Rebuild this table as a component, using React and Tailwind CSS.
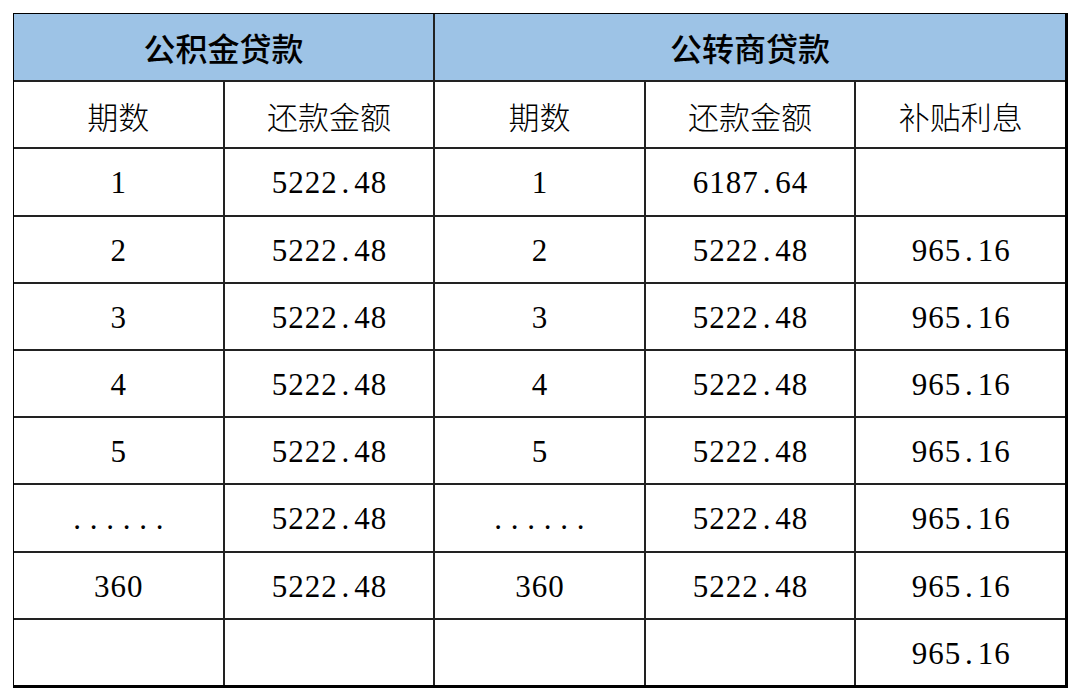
import React from "react";

const cjk = { fontFamily: '"Noto Sans CJK SC", "Noto Sans", sans-serif' };

function Num({ v }) {
  return (
    <span className="flex pt-[2px]">
      {v.split("").map((c, i) => (
        <span
          key={i}
          className="inline-block w-[16.5px] text-center text-[31px] leading-none font-['Liberation_Serif',serif]"
        >
          {c}
        </span>
      ))}
    </span>
  );
}

function Cell({ children, className = "" }) {
  return (
    <div className={"bg-white flex items-center justify-center text-black " + className}>{children}</div>
  );
}

function CjkCell({ t }) {
  return (
    <Cell>
      <span className="text-[31px] leading-none pt-[2px] font-light" style={cjk}>{t}</span>
    </Cell>
  );
}

const rows = [
  ["1", "5222.48", "1", "6187.64", ""],
  ["2", "5222.48", "2", "5222.48", "965.16"],
  ["3", "5222.48", "3", "5222.48", "965.16"],
  ["4", "5222.48", "4", "5222.48", "965.16"],
  ["5", "5222.48", "5", "5222.48", "965.16"],
  ["......", "5222.48", "......", "5222.48", "965.16"],
  ["360", "5222.48", "360", "5222.48", "965.16"],
  ["", "", "", "", "965.16"],
];

export default function App() {
  return (
    <div className="w-[1080px] h-[700px] bg-white pt-[13px] pl-[13px]">
      <div className="w-[1055px] h-[675px] border-l border-t border-r-[3px] border-b-[3px] border-black bg-[#222] grid grid-cols-5 grid-rows-[68fr_repeat(9,67fr)] gap-[2px]">
        <div className="col-span-2 bg-[#9dc3e6] flex items-center justify-center">
          <span className="text-[32px] font-medium leading-none" style={cjk}>公积金贷款</span>
        </div>
        <div className="col-span-3 bg-[#9dc3e6] flex items-center justify-center">
          <span className="text-[32px] font-medium leading-none" style={cjk}>公转商贷款</span>
        </div>
        <CjkCell t="期数" />
        <CjkCell t="还款金额" />
        <CjkCell t="期数" />
        <CjkCell t="还款金额" />
        <CjkCell t="补贴利息" />
        {rows.map((r, i) =>
          r.map((v, j) => (
            <Cell key={i + "-" + j}>{v ? <Num v={v} /> : null}</Cell>
          ))
        )}
      </div>
    </div>
  );
}
